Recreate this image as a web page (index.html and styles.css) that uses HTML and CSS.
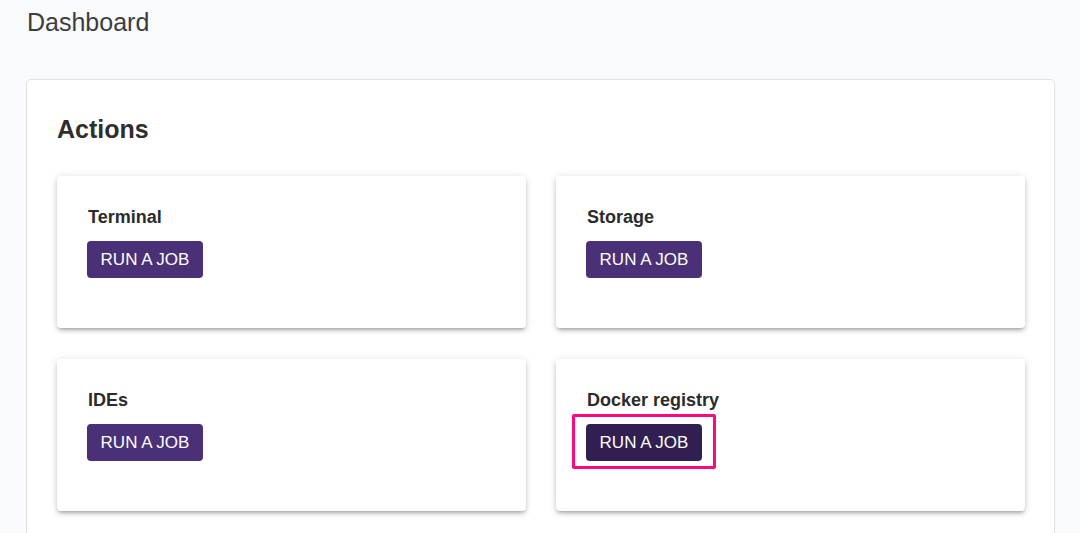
FILE: index.html
```html
<!DOCTYPE html>
<html>
<head>
<meta charset="utf-8">
<link rel="stylesheet" href="styles.css">
</head>
<body>
<div class="page">
  <h1 class="page-title">Dashboard</h1>
  <section class="panel">
    <h2 class="panel-title">Actions</h2>
    <div class="grid">
      <div class="card">
        <h3 class="card-title">Terminal</h3>
        <button class="btn">RUN A JOB</button>
      </div>
      <div class="card">
        <h3 class="card-title">Storage</h3>
        <button class="btn">RUN A JOB</button>
      </div>
      <div class="card">
        <h3 class="card-title">IDEs</h3>
        <button class="btn">RUN A JOB</button>
      </div>
      <div class="card">
        <h3 class="card-title">Docker registry</h3>
        <span class="focus-wrap"><button class="btn btn-active">RUN A JOB</button></span>
      </div>
    </div>
  </section>
</div>
</body>
</html>
```

FILE: styles.css
```css
html, body {
  margin: 0;
  padding: 0;
  background: #f9fafc;
  font-family: "Liberation Sans", Arial, sans-serif;
  overflow: hidden;
}
.page {
  padding: 6px 25px 0 26px;
}
.page-title {
  margin: 0 0 0 1px;
  font-size: 25px;
  font-weight: 400;
  line-height: 32px;
  color: #3d3d3d;
}
.panel {
  margin-top: 41px;
  background: #fff;
  border: 1px solid #e2e2e6;
  border-radius: 5px;
  padding: 30px 29px 40px 30px;
  height: 600px;
}
.panel-title {
  margin: 0;
  font-size: 25px;
  line-height: 38px;
  font-weight: 700;
  color: #2e2e2e;
}
.grid {
  margin-top: 28px;
  display: grid;
  grid-template-columns: 1fr 1fr;
  column-gap: 30px;
  row-gap: 31px;
}
.card {
  background: #fff;
  border-radius: 4px;
  height: 152px;
  box-sizing: border-box;
  padding: 30px 31px;
  box-shadow: 0 3px 3px -2px rgba(0,0,0,0.2), 0 3px 4px 0 rgba(0,0,0,0.14), 0 1px 8px 0 rgba(0,0,0,0.12);
}
.card-title {
  margin: 0 0 13px;
  font-size: 18px;
  line-height: 22px;
  font-weight: 700;
  color: #2b2b2b;
}
.btn {
  display: block;
  margin-left: -1px;
  width: 116px;
  height: 37px;
  border: none;
  border-radius: 4px;
  background: #4a3077;
  color: #fff;
  font-family: "Liberation Sans", Arial, sans-serif;
  font-size: 17px;
  padding: 0;
  cursor: pointer;
}
.btn-active {
  background: #321f52;
}
.focus-wrap {
  position: relative;
  display: block;
  width: 116px;
}
.focus-wrap::after {
  content: "";
  position: absolute;
  left: -15px;
  top: -10px;
  width: 138px;
  height: 49px;
  border: 3px solid #ff0a7c;
  border-radius: 2px;
}
```
